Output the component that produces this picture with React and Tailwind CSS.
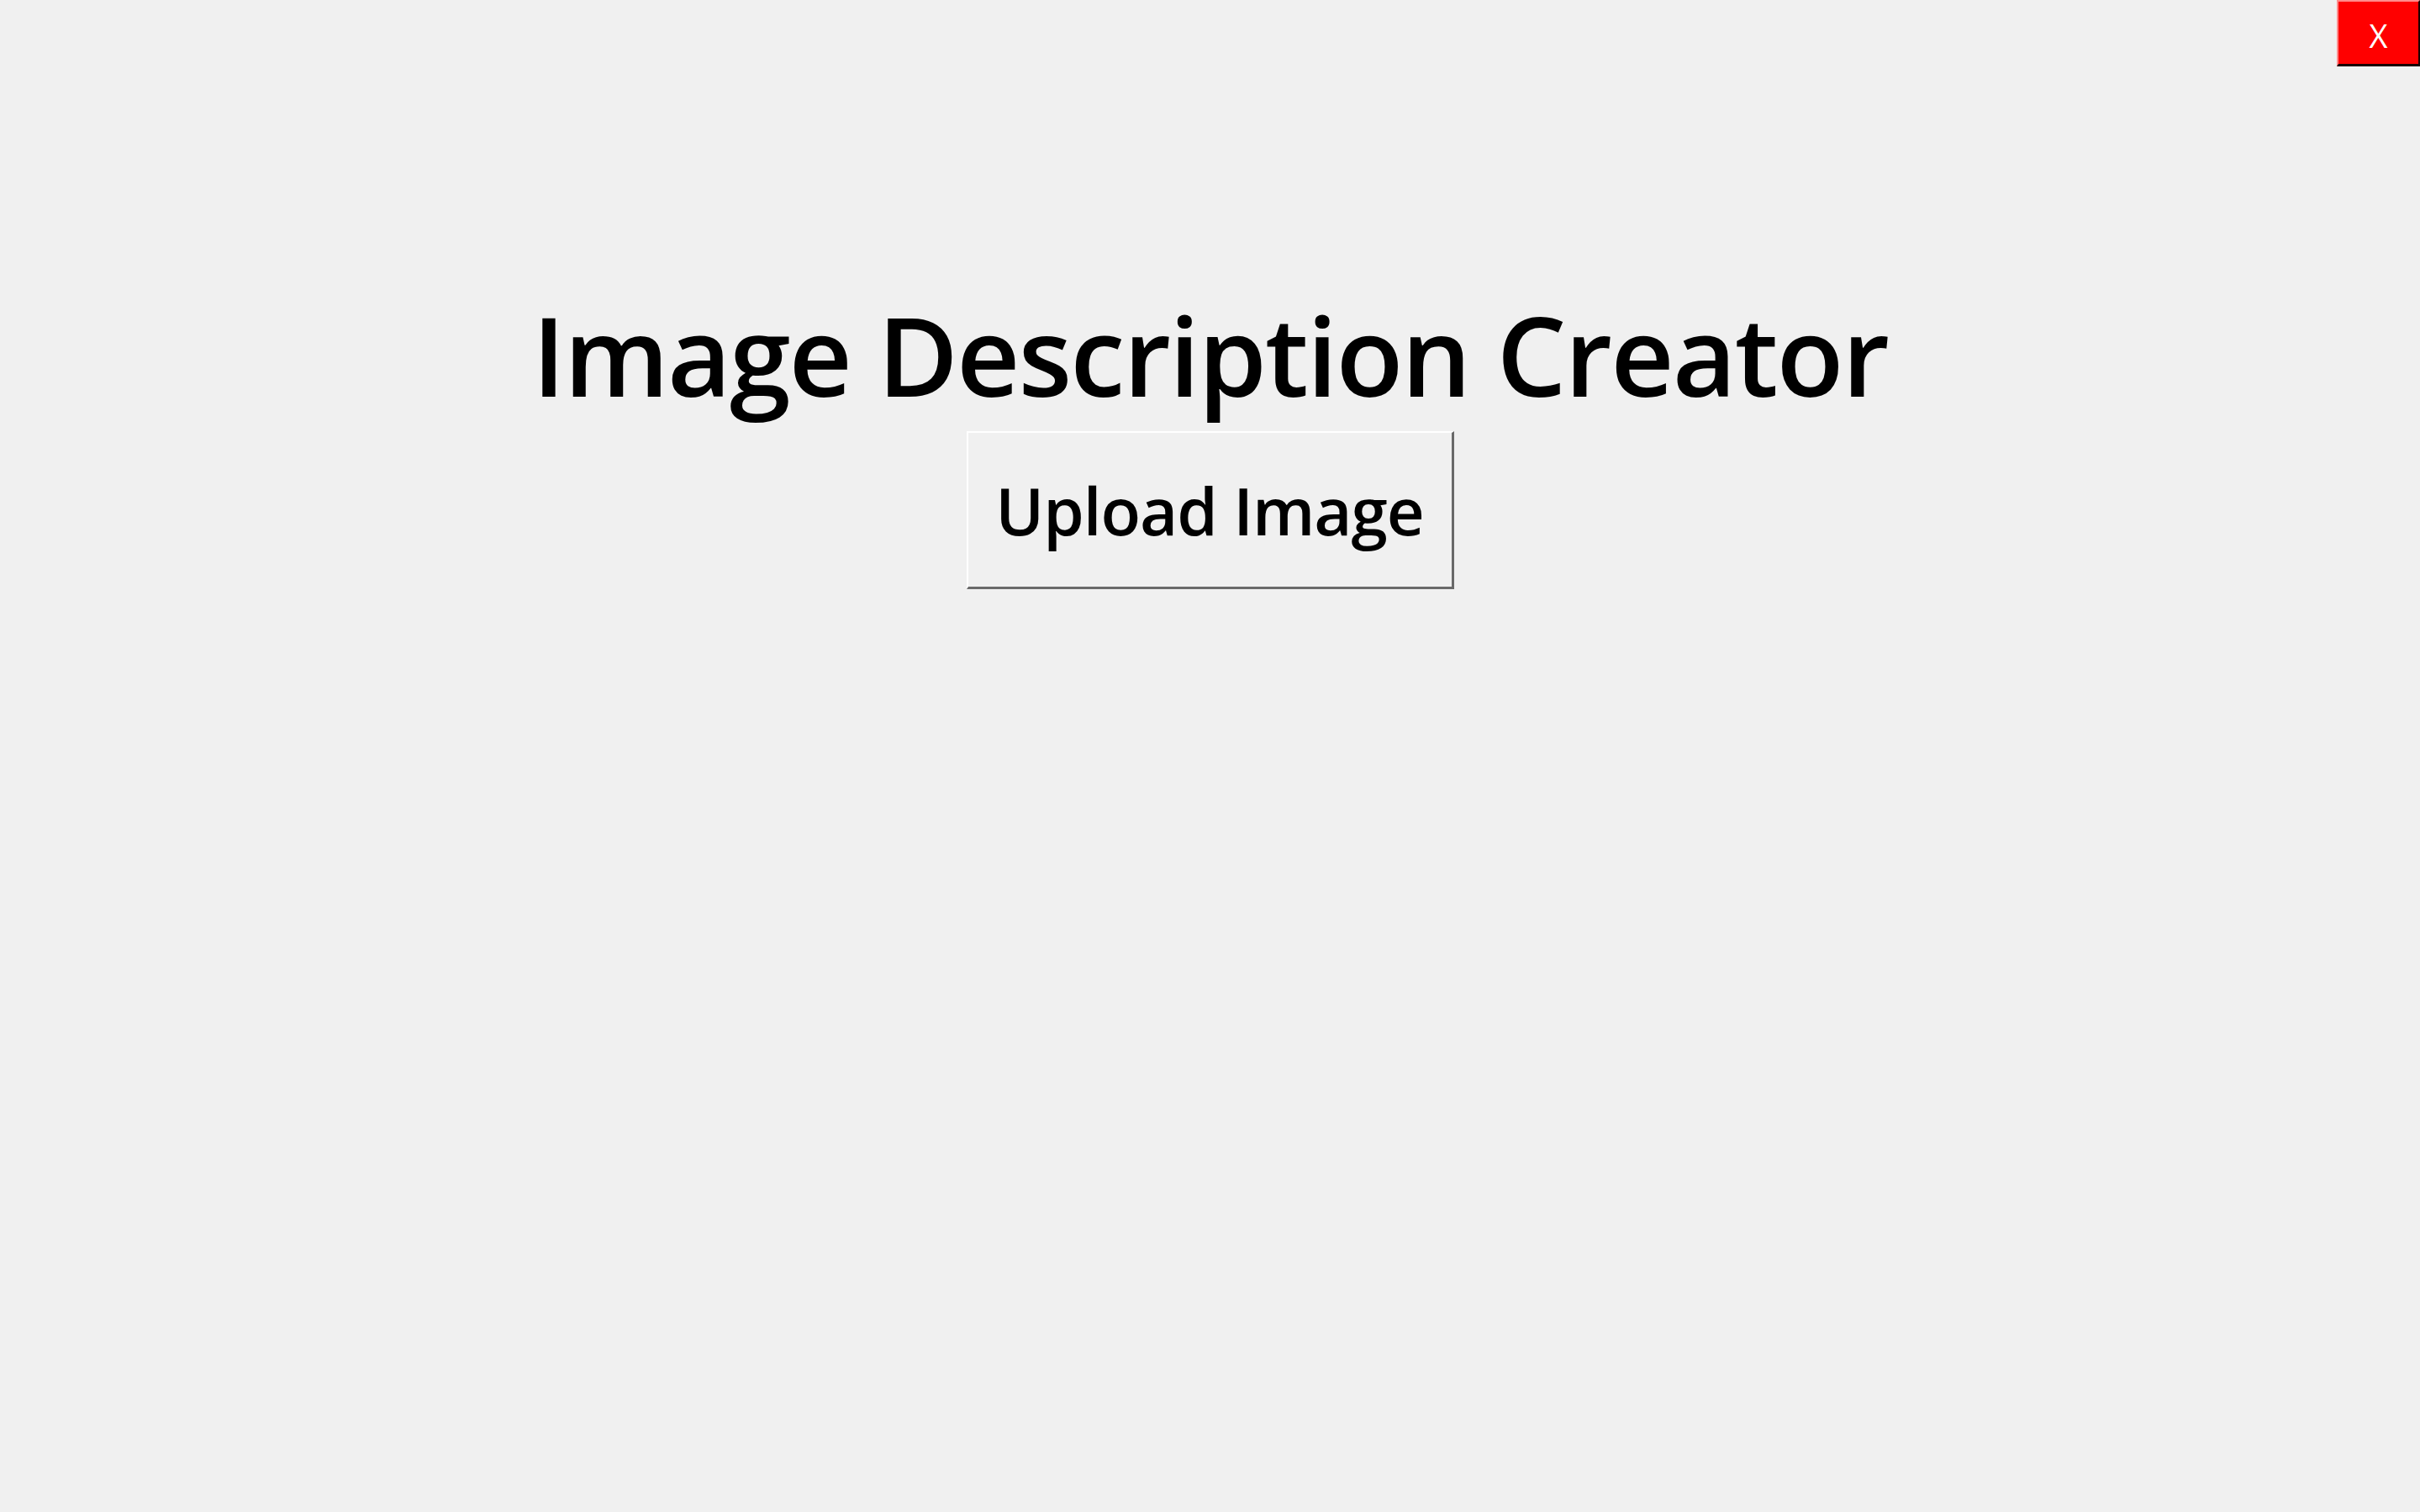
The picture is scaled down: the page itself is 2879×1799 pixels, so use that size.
export default function App() {
  return (
    <div
      className="relative w-full h-[1799px] bg-[#f0f0f0] overflow-hidden"
      style={{ fontFamily: '"Open Sans", "Noto Sans", sans-serif' }}
    >
      <button className="absolute top-0 right-0 w-[99px] h-[79px] bg-[#ff0000] text-white text-[38px] leading-none flex items-center justify-center pt-[6px] border-t-2 border-l-2 border-t-[#ff8c8c] border-l-[#ff8c8c] border-b-[3px] border-r-2 border-b-[#1a0000] border-r-[#1a0000]">
        X
      </button>
      <div className="flex flex-col items-center pt-[341px]">
        <h1 className="text-[131px] leading-[160px] font-semibold text-black tracking-[-2px]">
          Image Description Creator
        </h1>
        <button className="mt-[12px] w-[580px] h-[188px] bg-[#f0f0f0] border-t-2 border-l-2 border-t-[#ffffff] border-l-[#ffffff] border-b-[3px] border-r-[3px] border-b-[#696969] border-r-[#696969] flex items-center justify-center text-[78px] font-semibold text-black leading-none tracking-[-1px]">
          Upload Image
        </button>
      </div>
    </div>
  );
}
